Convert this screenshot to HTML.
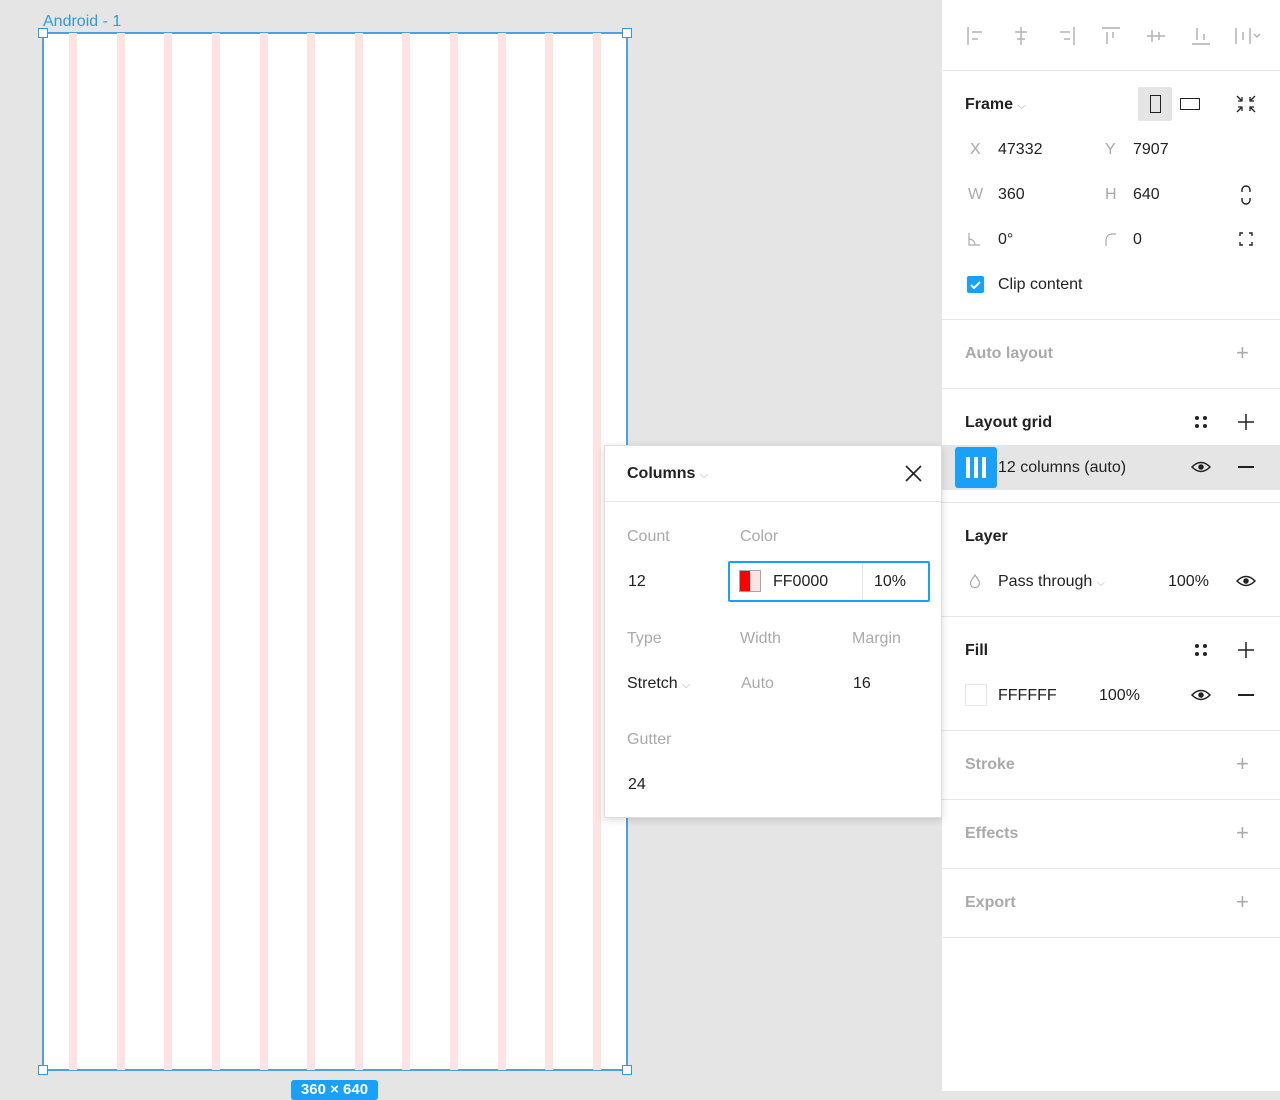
<!DOCTYPE html>
<html><head><meta charset="utf-8"><style>
*{margin:0;padding:0;box-sizing:border-box}
body{width:1280px;height:1091px;overflow:hidden;background:#e5e5e5;font-family:"Liberation Sans",sans-serif;position:relative;color:#222}
.a{position:absolute}
.t{position:absolute;font-size:16px;line-height:18px;white-space:nowrap;margin-top:1px}
.g{color:#aaa}
.b{font-weight:bold}
.s{position:absolute;top:33px;width:8px;height:1037px;background:#fde3e3}
.hr{position:absolute;left:942px;width:338px;height:1px;background:#e6e6e6}
.h{position:absolute;width:10px;height:10px;background:#fff;border:1.5px solid #2d9cdb}
</style></head><body>
<div class="t" style="left:43px;top:12px;color:#2d9cdb;font-size:16px">Android - 1</div>
<div class="a" style="left:42px;top:32px;width:586px;height:1039px;background:#fff;border:2px solid #4aa3e0"></div>
<div class="s" style="left:69px"></div><div class="s" style="left:117px"></div><div class="s" style="left:164px"></div><div class="s" style="left:212px"></div><div class="s" style="left:260px"></div><div class="s" style="left:307px"></div><div class="s" style="left:355px"></div><div class="s" style="left:402px"></div><div class="s" style="left:450px"></div><div class="s" style="left:498px"></div><div class="s" style="left:545px"></div><div class="s" style="left:593px"></div>
<div class="h" style="left:38px;top:28px"></div><div class="h" style="left:622px;top:28px"></div><div class="h" style="left:38px;top:1065px"></div><div class="h" style="left:622px;top:1065px"></div>
<div class="a" style="left:291px;top:1080px;width:87px;height:20px;background:#18a0fb;border-radius:3px;color:#fff;font-size:15px;line-height:20px;text-align:center;font-weight:bold">360 × 640</div>

<div class="a" style="left:942px;top:0;width:338px;height:1091px;background:#fff"></div>
<svg class="a" style="left:942px;top:20px" width="338" height="32" fill="none" stroke="#b3b3b3" stroke-width="1.5">
<path d="M26 7v18M30 12h10M30 19h6"/><path d="M79 7v18M73 12h12M75 19h8"/><path d="M132 7v18M118 12h10M122 19h6"/>
<path d="M160 8h18M165 12v12M171 12v6"/><path d="M205 16h18M210 10v12M217 12v8"/><path d="M250 24h18M255 8v12M262 14v6"/>
<path d="M294 8v16M301 12v8M308 8v16M312 14l3 3 3-3"/></svg>
<div class="hr" style="top:70px"></div>
<div class="t b" style="left:965px;top:95px">Frame <span style="color:#aaa;font-weight:normal;font-size:11px">⌵</span></div>
<div class="a" style="left:1138px;top:87px;width:34px;height:34px;background:#e5e5e5;border-radius:2px"></div>
<div class="a" style="left:1150px;top:95px;width:11px;height:18px;border:1.5px solid #222"></div>
<div class="a" style="left:1180px;top:98px;width:20px;height:12px;border:1.5px solid #222"></div>
<svg class="a" style="left:1234px;top:93px" width="24" height="22" stroke="#222" stroke-width="1.3" fill="none"><path d="M3 3l5 5M8 4v4H4M21 3l-5 5M16 4v4h4M3 19l5-5M4 14h4v4M21 19l-5-5M20 14h-4v4"/></svg>
<div class="t g" style="left:970px;top:140px">X</div><div class="t" style="left:998px;top:140px">47332</div>
<div class="t g" style="left:1105px;top:140px">Y</div><div class="t" style="left:1133px;top:140px">7907</div>
<div class="t g" style="left:968px;top:185px">W</div><div class="t" style="left:998px;top:185px">360</div>
<div class="t g" style="left:1105px;top:185px">H</div><div class="t" style="left:1133px;top:185px">640</div>
<svg class="a" style="left:1238px;top:184px" width="16" height="22" stroke="#222" stroke-width="1.4" fill="none"><path d="M4 8V6a4 4 0 0 1 8 0v2M4 14v2a4 4 0 0 0 8 0v-2"/></svg>
<svg class="a" style="left:966px;top:231px" width="16" height="16" stroke="#aaa" stroke-width="1.2" fill="none"><path d="M3 2v12h11M3 8a6 6 0 0 1 6 6"/></svg>
<div class="t" style="left:998px;top:230px">0°</div>
<svg class="a" style="left:1103px;top:231px" width="16" height="16" stroke="#aaa" stroke-width="1.2" fill="none"><path d="M3 15V9a6 6 0 0 1 6-6h4"/></svg>
<div class="t" style="left:1133px;top:230px">0</div>
<svg class="a" style="left:1238px;top:231px" width="16" height="16" stroke="#222" stroke-width="1.4" fill="none"><path d="M2 5V2h3M11 2h3v3M14 11v3h-3M5 14H2v-3"/></svg>
<div class="a" style="left:967px;top:276px;width:17px;height:17px;background:#18a0fb;border-radius:2px"></div>
<svg class="a" style="left:967px;top:276px" width="17" height="17" stroke="#fff" stroke-width="2" fill="none"><path d="M4 9l3 3 6-6"/></svg>
<div class="t" style="left:998px;top:275px">Clip content</div>
<div class="hr" style="top:319px"></div>
<div class="t b g" style="left:965px;top:344px">Auto layout</div>
<div class="t g" style="left:1236px;top:340px;font-size:22px;line-height:24px">+</div>
<div class="hr" style="top:388px"></div>
<div class="t b" style="left:965px;top:413px">Layout grid</div>
<svg class="a" style="left:1193px;top:414px" width="16" height="16" fill="#222"><circle cx="4" cy="4" r="2"/><circle cx="12" cy="4" r="2"/><circle cx="4" cy="12" r="2"/><circle cx="12" cy="12" r="2"/></svg>
<svg class="a" style="left:1237px;top:413px" width="18" height="18" stroke="#222" stroke-width="1.5"><path d="M9 1v16M1 9h16"/></svg>
<div class="a" style="left:942px;top:445px;width:338px;height:45px;background:#e5e5e5"></div>
<div class="a" style="left:955px;top:447px;width:42px;height:41px;background:#18a0fb;border-radius:3px"></div>
<div class="a" style="left:966px;top:457px;width:4px;height:21px;background:#fff"></div><div class="a" style="left:974px;top:457px;width:4px;height:21px;background:#fff"></div><div class="a" style="left:982px;top:457px;width:4px;height:21px;background:#fff"></div>
<div class="t" style="left:998px;top:458px">12 columns (auto)</div>
<svg class="a" style="left:1190px;top:460px" width="22" height="14" stroke="#222" stroke-width="1.5" fill="none"><path d="M2 7q9-9 18 0q-9 9-18 0z"/><circle cx="11" cy="7" r="2" fill="#222"/></svg>
<div class="a" style="left:1238px;top:466px;width:16px;height:1.5px;background:#222"></div>
<div class="hr" style="top:502px"></div>
<div class="t b" style="left:965px;top:527px">Layer</div>
<svg class="a" style="left:968px;top:573px" width="14" height="16" stroke="#aaa" stroke-width="1.2" fill="none"><path d="M7 2l4 6a4.5 4.5 0 1 1-8 0z"/></svg>
<div class="t" style="left:998px;top:572px">Pass through <span style="color:#aaa;font-size:11px">⌵</span></div>
<div class="t" style="left:1168px;top:572px">100%</div>
<svg class="a" style="left:1235px;top:574px" width="22" height="14" stroke="#222" stroke-width="1.5" fill="none"><path d="M2 7q9-9 18 0q-9 9-18 0z"/><circle cx="11" cy="7" r="2" fill="#222"/></svg>
<div class="hr" style="top:616px"></div>
<div class="t b" style="left:965px;top:641px">Fill</div>
<svg class="a" style="left:1193px;top:642px" width="16" height="16" fill="#222"><circle cx="4" cy="4" r="2"/><circle cx="12" cy="4" r="2"/><circle cx="4" cy="12" r="2"/><circle cx="12" cy="12" r="2"/></svg>
<svg class="a" style="left:1237px;top:641px" width="18" height="18" stroke="#222" stroke-width="1.5"><path d="M9 1v16M1 9h16"/></svg>
<div class="a" style="left:965px;top:684px;width:22px;height:22px;border:1px solid #e5e5e5;background:#fff"></div>
<div class="t" style="left:998px;top:686px">FFFFFF</div>
<div class="t" style="left:1099px;top:686px">100%</div>
<svg class="a" style="left:1190px;top:688px" width="22" height="14" stroke="#222" stroke-width="1.5" fill="none"><path d="M2 7q9-9 18 0q-9 9-18 0z"/><circle cx="11" cy="7" r="2" fill="#222"/></svg>
<div class="a" style="left:1238px;top:694px;width:16px;height:1.5px;background:#222"></div>
<div class="hr" style="top:730px"></div>
<div class="t b g" style="left:965px;top:755px">Stroke</div>
<div class="t g" style="left:1236px;top:751px;font-size:22px;line-height:24px">+</div>
<div class="hr" style="top:799px"></div>
<div class="t b g" style="left:965px;top:824px">Effects</div>
<div class="t g" style="left:1236px;top:820px;font-size:22px;line-height:24px">+</div>
<div class="hr" style="top:868px"></div>
<div class="t b g" style="left:965px;top:893px">Export</div>
<div class="t g" style="left:1236px;top:889px;font-size:22px;line-height:24px">+</div>
<div class="hr" style="top:937px"></div>

<div class="a" style="left:604px;top:445px;width:338px;height:373px;background:#fff;border:1px solid #ddd;border-radius:2px;box-shadow:0 2px 8px rgba(0,0,0,.15)"></div>
<div class="t b" style="left:627px;top:464px">Columns <span style="color:#aaa;font-weight:normal;font-size:11px">⌵</span></div>
<svg class="a" style="left:905px;top:465px" width="17" height="17" stroke="#222" stroke-width="1.6"><path d="M1 1l15 15M16 1L1 16"/></svg>
<div class="a" style="left:605px;top:501px;width:336px;height:1px;background:#e6e6e6"></div>
<div class="t g" style="left:627px;top:527px">Count</div><div class="t g" style="left:740px;top:527px">Color</div>
<div class="t" style="left:628px;top:572px">12</div>
<div class="a" style="left:728px;top:561px;width:202px;height:41px;border:2px solid #18a0fb;border-radius:2px"></div>
<div class="a" style="left:862px;top:563px;width:1px;height:37px;background:#e5e5e5"></div>
<div class="a" style="left:739px;top:570px;width:22px;height:22px;border:1px solid #9ab;background:linear-gradient(90deg,#f00 50%,#fde3e3 50%)"></div>
<div class="t" style="left:773px;top:572px">FF0000</div><div class="t" style="left:874px;top:572px">10%</div>
<div class="t g" style="left:627px;top:629px">Type</div><div class="t g" style="left:740px;top:629px">Width</div><div class="t g" style="left:852px;top:629px">Margin</div>
<div class="t" style="left:627px;top:674px">Stretch <span style="color:#aaa;font-size:11px">⌵</span></div>
<div class="t g" style="left:741px;top:674px">Auto</div><div class="t" style="left:853px;top:674px">16</div>
<div class="t g" style="left:627px;top:730px">Gutter</div>
<div class="t" style="left:628px;top:775px">24</div>
</body></html>
